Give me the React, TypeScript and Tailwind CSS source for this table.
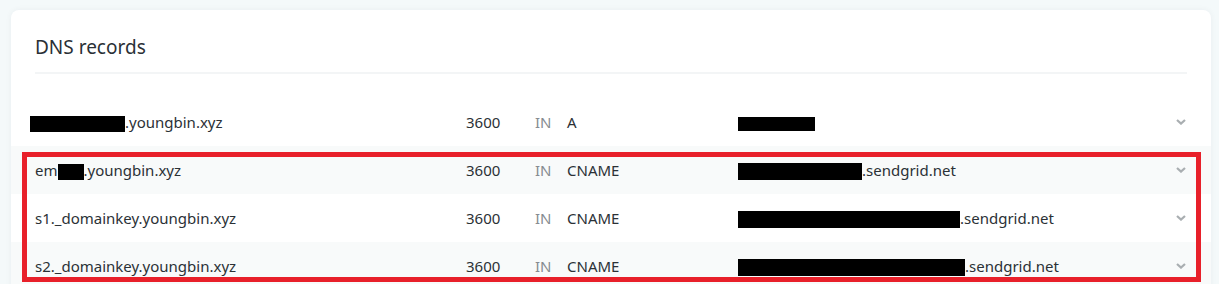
const rows = [
  { pre: '', hideW: 95, hideOff: -5, host: '.youngbin.xyz', ttl: '3600', type: 'A', valW: 77, val: '' },
  { pre: 'em', hideW: 26, hideOff: 0, host: '.youngbin.xyz', ttl: '3600', type: 'CNAME', valW: 124, val: '.sendgrid.net' },
  { pre: 's1._domainkey', hideW: 0, hideOff: 0, host: '.youngbin.xyz', ttl: '3600', type: 'CNAME', valW: 222, val: '.sendgrid.net' },
  { pre: 's2._domainkey', hideW: 0, hideOff: 0, host: '.youngbin.xyz', ttl: '3600', type: 'CNAME', valW: 227, val: '.sendgrid.net' },
];

function Chevron() {
  return (
    <svg width="10" height="6" viewBox="0 0 10 6" className="text-[#a9aeb1]">
      <path d="M1 1 L5 4.6 L9 1" fill="none" stroke="currentColor" strokeWidth="2.2" />
    </svg>
  );
}

function Redacted({ w, h = 16 }: { w: number; h?: number }) {
  return <span className="inline-block bg-black align-middle" style={{ width: w, height: h }} />;
}

export default function App() {
  return (
    <div className="min-h-screen bg-[#f4f9fa] pt-[10px] pl-[11px] pr-[8px] font-['Noto_Sans',sans-serif] text-[#2b3136]">
      <div className="relative rounded-lg bg-white shadow-[0_0_6px_rgba(0,40,60,0.05)] pb-6">
        <div className="px-6 pt-[22px]">
          <h2 className="text-[19px] leading-[30px] text-[#2a3036]">DNS records</h2>
          <div className="mt-[10px] h-[2px] bg-[#f3f5f6]" />
        </div>
        <div className="mt-[24px]">
          {rows.map((r, i) => (
            <div
              key={i}
              className={`flex h-12 items-center pl-6 pr-[25px] text-[15px] ${i % 2 === 1 ? 'bg-[#f8fafa]' : 'bg-white'}`}
            >
              <div className="w-[431px] whitespace-nowrap">
                {r.pre}
                {r.hideW > 0 && (
                  <span style={{ marginLeft: r.hideOff }}>
                    <Redacted w={r.hideW} />
                  </span>
                )}
                {r.host}
              </div>
              <div className="w-[69px]">{r.ttl}</div>
              <div className="w-[32px] text-[#868b90]">IN</div>
              <div className="w-[171px]">{r.type}</div>
              <div className="flex-1 whitespace-nowrap">
                <Redacted w={r.valW} h={i === 0 ? 14 : 17} />
                {r.val}
              </div>
              <Chevron />
            </div>
          ))}
        </div>
        <div className="pointer-events-none absolute left-[11px] top-[142px] h-[130px] w-[1179px] border-[5px] border-[#e8202a]" />
      </div>
    </div>
  );
}
